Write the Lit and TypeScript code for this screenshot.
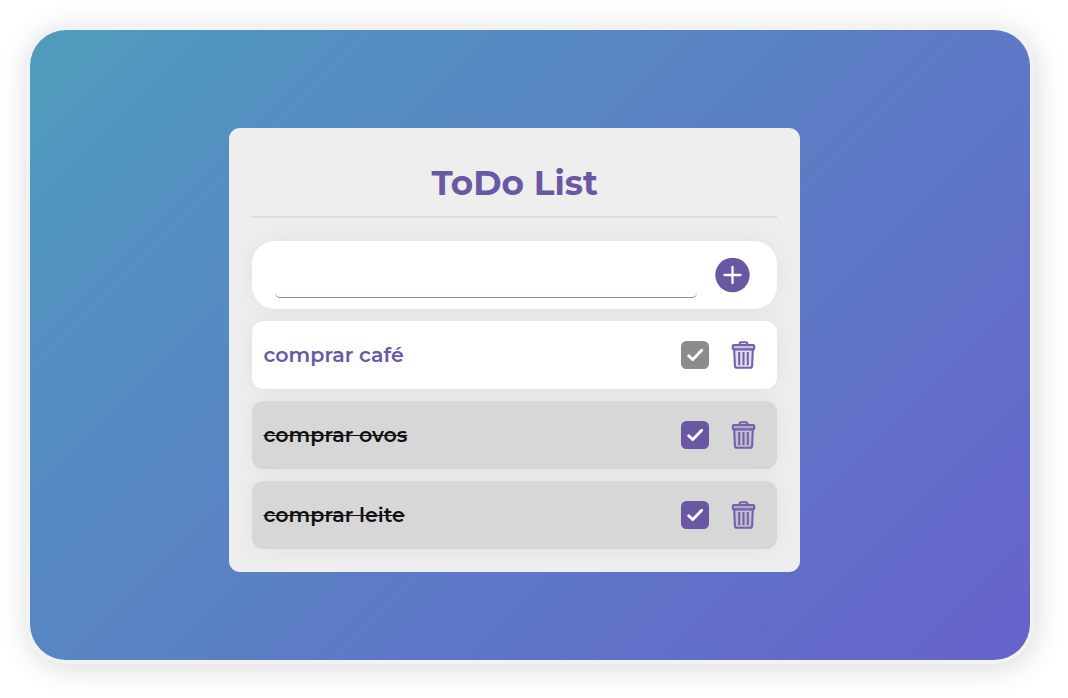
import { LitElement, html, css } from "lit";
import { customElement, property } from "lit/decorators.js";

@customElement("todo-item")
class TodoItem extends LitElement {
  @property() label = "";
  @property({ type: Boolean, reflect: true }) done = false;

  static styles = css`
    :host {
      display: flex;
      align-items: center;
      box-sizing: border-box;
      height: 68.3px;
      padding: 0 20.6px 0 11.5px;
      border-radius: 11.5px;
      background: #fff;
      color: #6a58a5;
      box-shadow: 0 0 23px rgba(0, 0, 0, 0.055);
    }
    :host([done]) {
      background: #d7d7d7;
      color: #111;
    }
    .label {
      flex: 1;
      padding-bottom: 1px;
      font-size: 20.6px;
      font-weight: 600;
      white-space: nowrap;
    }
    :host([done]) .text {
      text-decoration: line-through;
      text-decoration-thickness: 1px;
    }
    .check {
      display: flex;
      width: 28px;
      height: 28px;
      border-radius: 5.5px;
      background: #8c8c8c;
      margin-right: 21.5px;
    }
    :host([done]) .check {
      background: #6a56a3;
    }
    svg {
      display: block;
    }
  `;

  render() {
    return html`
      <span class="label"><span class="text">${this.label}</span></span>
      <span class="check">
        <svg width="28" height="28" viewBox="0 0 28 28" fill="none" stroke="#fff" stroke-width="2.9" stroke-linecap="round" stroke-linejoin="round">
          <path d="M7.7 14.8 L11.8 18.6 L20.7 9.3" />
        </svg>
      </span>
      <svg width="26" height="30" viewBox="0 0 26 30" fill="none" stroke="#7461ac" stroke-width="2.1" stroke-linejoin="round">
        <path d="M8.6 5 V4 Q8.6 2.3 10.3 2.3 H14.7 Q16.4 2.3 16.4 4 V5" />
        <rect x="1.8" y="5" width="21.4" height="4.4" rx="1" fill="#7461ac" fill-opacity=".4" />
        <path d="M3.2 9.8 L3.9 25.8 Q4.1 27.7 6.1 27.7 H18.9 Q20.9 27.7 21.1 25.8 L21.8 9.8" fill="#7461ac" fill-opacity=".2" />
        <path d="M8.2 12 V25.3 M12.5 12 V25.3 M16.8 12 V25.3" />
      </svg>
    `;
  }
}

@customElement("app-root")
class AppRoot extends LitElement {
  static styles = css`
    :host {
      display: block;
      box-sizing: border-box;
      height: 698px;
      padding: 30px 38px 38px 30px;
      background: #fff;
      overflow: hidden;
      font-family: Montserrat, Inter, "Open Sans", sans-serif;
    }
    .stage {
      box-sizing: border-box;
      height: 630px;
      padding: 98px 229.7px 0 199.3px;
      border-radius: 36px;
      background: linear-gradient(135deg, #4f9dba, #5293c0 15%, #6762cb);
      box-shadow: 0 0 0 4px #f2f2f2, 2px 4px 30px 2px rgba(0, 0, 0, 0.17);
    }
    .panel {
      box-sizing: border-box;
      height: 444.3px;
      padding: 33px 23px 0 22.7px;
      border-radius: 11px;
      background: #eee;
    }
    h1 {
      box-sizing: border-box;
      margin: 0;
      height: 57px;
      line-height: 44px;
      border-bottom: 2px solid #dcdcdc;
      font-size: 34.29px;
      font-weight: 700;
      text-align: center;
      color: #6a58a5;
    }
    .list {
      display: flex;
      flex-direction: column;
      gap: 11.7px;
      margin-top: 23px;
    }
    .entry {
      display: flex;
      align-items: center;
      box-sizing: border-box;
      height: 68.3px;
      padding: 0 27.5px 0 23px;
      gap: 17.5px;
      border-radius: 23px;
      background: #fff;
      box-shadow: 0 0 23px rgba(0, 0, 0, 0.055);
    }
    input {
      flex: 1;
      min-width: 0;
      box-sizing: border-box;
      height: 46px;
      padding: 0 6px;
      border: 0;
      border-bottom: 1px solid #8f88b8;
      border-radius: 5.5px;
      outline: none;
      background: transparent;
      font: 600 20.6px Montserrat, Inter, sans-serif;
      color: #6a58a5;
    }
    svg {
      display: block;
    }
  `;

  items = [
    { label: "comprar café", done: false },
    { label: "comprar ovos", done: true },
    { label: "comprar leite", done: true },
  ];

  render() {
    return html`
      <main class="stage">
        <section class="panel">
          <h1>ToDo List</h1>
          <div class="list">
            <div class="entry">
              <input />
              <svg width="35" height="35" viewBox="0 0 35 35">
                <circle cx="17.5" cy="17" r="17.2" fill="#6a56a3" />
                <path d="M17.5 9 V25 M9.5 17 H25.5" stroke="#fff" stroke-width="2.3" stroke-linecap="round" />
              </svg>
            </div>
            ${this.items.map((i) => html`<todo-item .label=${i.label} ?done=${i.done}></todo-item>`)}
          </div>
        </section>
      </main>
    `;
  }
}
